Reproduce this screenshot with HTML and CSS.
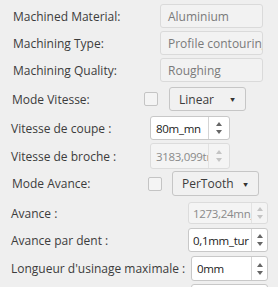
FILE: index.html
```html
<!DOCTYPE html>
<html lang="fr">
<head>
  <meta charset="UTF-8">
  <title>Paramètres d'usinage</title>
  <link rel="stylesheet" href="styles.css">
</head>
<body>
  <div class="form">
    <div class="row r1">
      <span class="label info-label">Machined Material:</span>
      <span class="value">Aluminium</span>
    </div>
    <div class="row r2">
      <span class="label info-label">Machining Type:</span>
      <span class="value">Profile contouring</span>
    </div>
    <div class="row r3">
      <span class="label info-label">Machining Quality:</span>
      <span class="value">Roughing</span>
    </div>

    <div class="row r4">
      <span class="label mode-label">Mode Vitesse:</span>
      <span class="check check-vitesse"></span>
      <span class="combo combo-vitesse">Linear<span class="drop">&#9660;</span></span>
    </div>
    <div class="row r5">
      <span class="label">Vitesse de coupe :</span>
      <span class="spin spin-vitesse"><span class="text">80m_mn</span><span class="arrows"><i class="up"></i><i class="down"></i></span></span>
    </div>
    <div class="row r6">
      <span class="label">Vitesse de broche :</span>
      <span class="spin spin-vitesse disabled"><span class="text">3183,099tr_mn</span><span class="arrows"><i class="up"></i><i class="down"></i></span></span>
    </div>

    <div class="row r7">
      <span class="label mode-label">Mode Avance:</span>
      <span class="check check-avance"></span>
      <span class="combo combo-avance">PerTooth<span class="drop">&#9660;</span></span>
    </div>
    <div class="row r8">
      <span class="label">Avance :</span>
      <span class="spin spin-avance disabled"><span class="text">1273,24mn_mn</span><span class="arrows"><i class="up"></i><i class="down"></i></span></span>
    </div>
    <div class="row r9">
      <span class="label">Avance par dent :</span>
      <span class="spin spin-avance"><span class="text">0,1mm_tur</span><span class="arrows"><i class="up"></i><i class="down"></i></span></span>
    </div>
    <div class="row r10">
      <span class="label long-label">Longueur d'usinage maximale :</span>
      <span class="spin spin-long"><span class="text">0mm</span><span class="arrows"><i class="up"></i><i class="down"></i></span></span>
    </div>
    <div class="row r11">
      <span class="label long-label"></span>
      <span class="spin spin-long"></span>
    </div>
  </div>
</body>
</html>
```

FILE: styles.css
```css
html, body {
  margin: 0;
  padding: 0;
  background-color: #efefef;
}

body {
  font-family: "Open Sans", "Noto Sans", sans-serif;
  font-size: 12px;
  color: #3c3c3c;
}

.form {
  display: flex;
  flex-direction: column;
  padding-top: 4px;
  height: 283px;
  overflow: hidden;
}

.row {
  display: flex;
  align-items: center;
  height: 24px;
  flex-shrink: 0;
}

.r2, .r3 { margin-top: 3px; }
.r4 { margin-top: 5px; }
.r5 { margin-top: 5px; }
.r6 { margin-top: 3px; height: 26px; }
.r7 { margin-top: 2px; height: 25px; }
.r8 { margin-top: 6px; height: 22px; }
.r9 { margin-top: 4px; }
.r10 { margin-top: 4px; height: 25px; }
.r11 { margin-top: 3px; }

.label {
  padding-left: 11px;
  white-space: nowrap;
}

.info-label {
  padding-left: 13px;
  width: 147px;
}

.mode-label {
  padding-left: 12px;
}

.r4 .label { width: 132px; }
.r7 .label { width: 136px; }
.r5 .label, .r6 .label { width: 139px; }
.r8 .label, .r9 .label { width: 177px; }
.long-label { width: 180px; }

.value {
  box-sizing: border-box;
  width: 103px;
  height: 100%;
  border: 1px solid #dadada;
  border-radius: 3px;
  background-color: #f2f2f2;
  color: #7a7a7a;
  padding-left: 7px;
  display: flex;
  align-items: center;
  overflow: hidden;
  white-space: nowrap;
}

.check {
  box-sizing: border-box;
  width: 14px;
  height: 14px;
  border: 1px solid #c4c4c4;
  border-radius: 2px;
  background-color: #f4f4f4;
}

.check-vitesse { margin-right: 11px; }
.check-avance { margin-right: 10px; }

.combo {
  box-sizing: border-box;
  height: 100%;
  border: 1px solid #c6c6c6;
  border-radius: 3px;
  background-color: #f1f1f1;
  padding-left: 9px;
  display: flex;
  align-items: center;
  position: relative;
}

.combo-vitesse { width: 77px; }
.combo-avance { width: 87px; }

.drop {
  position: absolute;
  right: 9px;
  top: 50%;
  transform: translateY(-50%) scaleX(1.1);
  font-size: 7px;
  color: #333;
}

.spin {
  box-sizing: border-box;
  height: 100%;
  border: 1px solid #c8c8c8;
  border-radius: 3px;
  background-color: #ffffff;
  display: flex;
  overflow: hidden;
}

.spin-vitesse { width: 80px; }
.spin-avance { width: 80px; }
.spin-long { width: 77px; }

.spin .text {
  flex: 1;
  min-width: 0;
  padding-left: 5px;
  display: flex;
  align-items: center;
  white-space: nowrap;
  overflow: hidden;
  color: #222;
  font-size: 11.5px;
  letter-spacing: -0.3px;
}

.spin-avance .text { padding-left: 4px; }

.spin .arrows {
  width: 20px;
  border-left: 1px solid #d4d4d4;
  display: flex;
  flex-direction: column;
  align-items: center;
  justify-content: center;
  gap: 4px;
}

.spin-avance .arrows, .spin-long .arrows { width: 15px; }

.arrows i {
  width: 0;
  height: 0;
  border-left: 3px solid transparent;
  border-right: 3px solid transparent;
}

.arrows .up { border-bottom: 4px solid #666; }
.arrows .down { border-top: 4px solid #666; }

.spin.disabled {
  background-color: #f4f4f4;
  border-color: #dcdcdc;
}

.spin.disabled .text { color: #8a8a8a; }
.spin.disabled .arrows { border-left-color: #e2e2e2; }
.spin.disabled .arrows .up { border-bottom-color: #c4c4c4; }
.spin.disabled .arrows .down { border-top-color: #c4c4c4; }
```
